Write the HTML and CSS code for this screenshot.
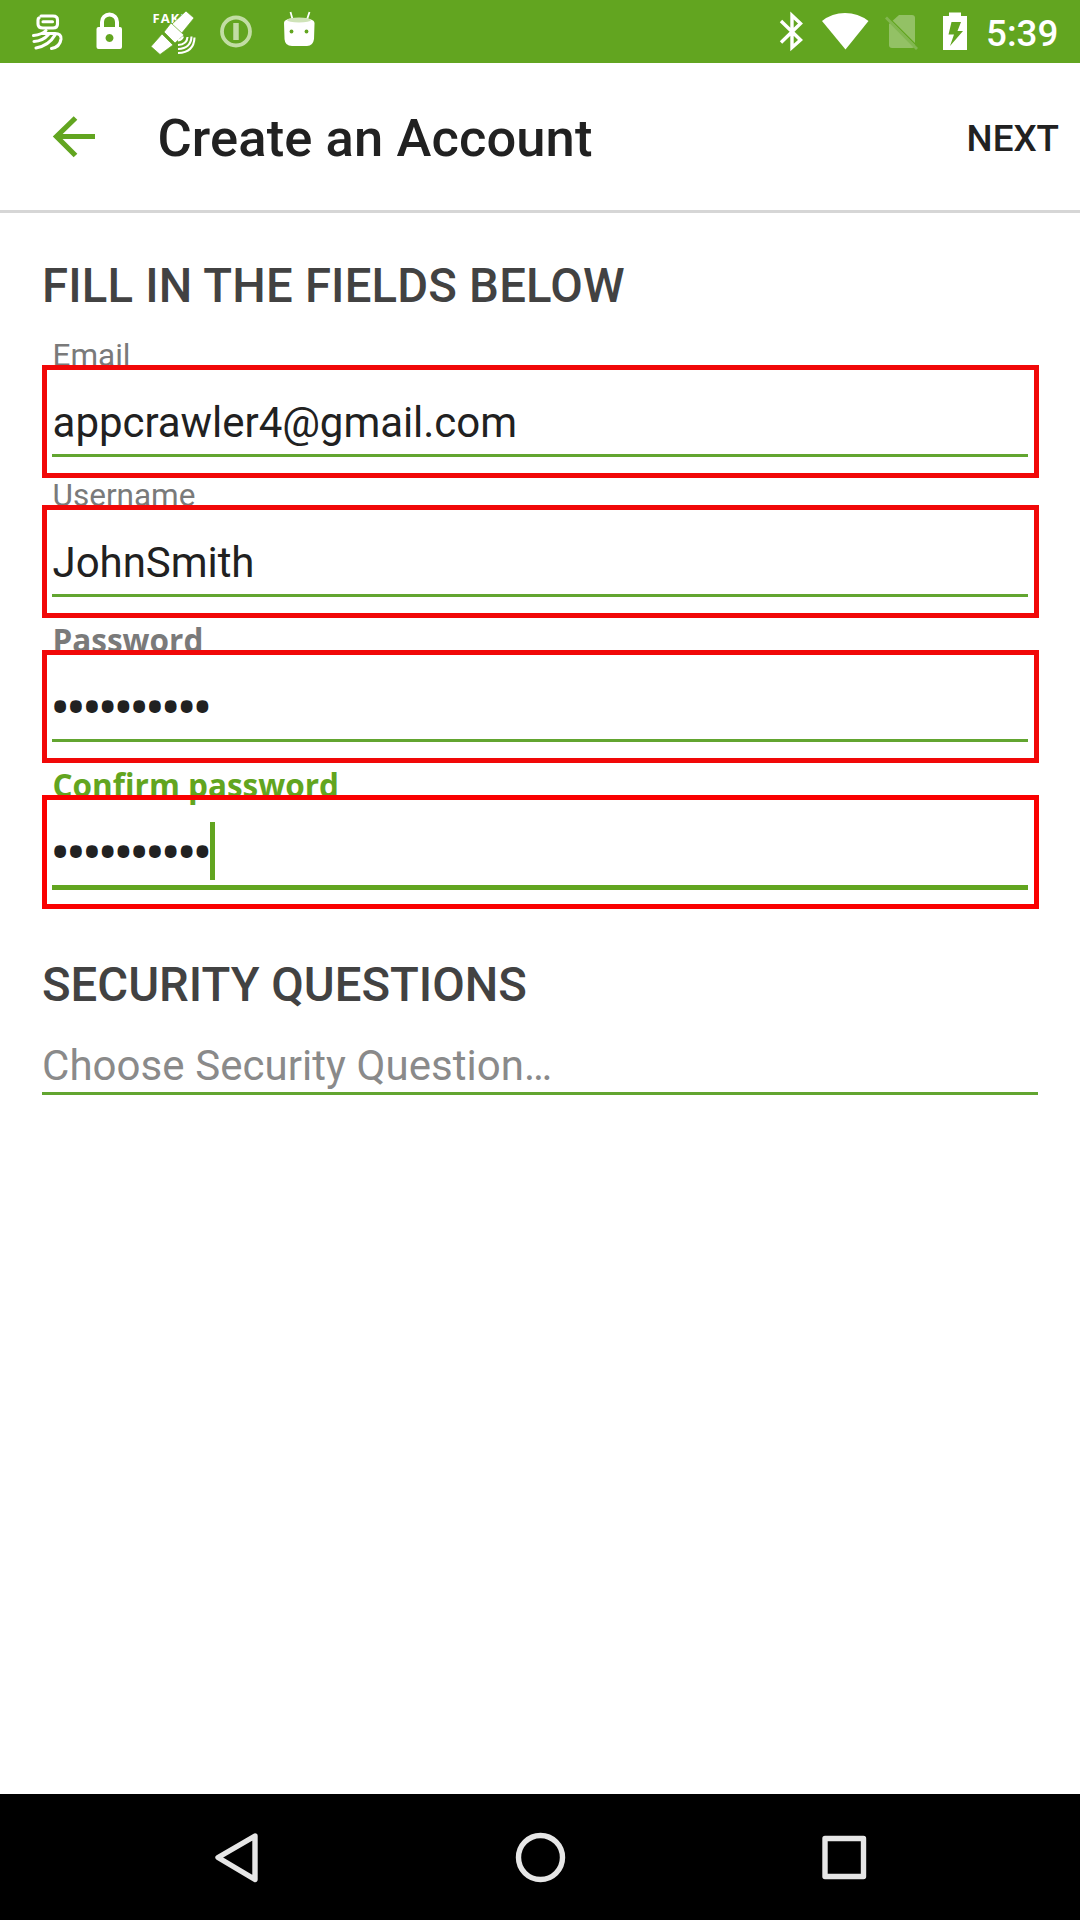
FILE: index.html
```html
<!DOCTYPE html>
<html lang="en">
<head>
<meta charset="utf-8">
<title>Create an Account</title>
<link rel="stylesheet" href="styles.css">
</head>
<body>
<div class="status">
  <div class="notifications">
    <svg width="63" height="63" viewBox="16 0 63 63" fill="none" stroke="#fff" stroke-width="3.1" stroke-linecap="round" stroke-linejoin="round">
      <path d="M41 16H53Q57.500 16 57.500 20V24Q57.500 28 53 28H43Q38 28 38 24V20Q38 18.500 39 18M43 21.800H52.500"/>
      <path d="M33.500 35.500Q42 34.500 46 30.500M43 33.500H55Q61.500 33.500 61 39Q60 47 51.500 48.500M34 41.500Q43 41 48.500 34.500M36 48Q49 45.500 55 35"/>
    </svg>
    <svg width="63" height="63" viewBox="79 0 63 63">
      <path d="M102 29V22a7.500 7.500 0 0 1 15 0V29" fill="none" stroke="#fff" stroke-width="4"/>
      <path fill="#fff" fill-rule="evenodd" d="M98.500 27H120q2 0 2 2V47q0 2-2 2H98.500q-2 0-2-2V29q0-2 2-2ZM109.500 34a4 4 0 1 0 .01 0Z"/>
    </svg>
    <svg width="63" height="63" viewBox="142 0 63 63">
      <text class="tag" x="152.500" y="23">FAKE</text>
      <g fill="#fff" stroke="#62a520" stroke-width=".7">
        <path d="M186 11L194 18L181 34L171 25Z"/>
        <path d="M162 34L173 45L160 54.500L151 46.500Z"/>
        <path d="M171 23L184 35L175 43L164 32Z"/>
      </g>
      <path d="M178 40.500q4-.5 5-4M178 45q9-.5 9.500-8M178 49q13-.5 13.500-12.500M178 53q16-.5 16.500-15.500" fill="none" stroke="#fff" stroke-width="2.100"/>
    </svg>
    <svg width="63" height="63" viewBox="205 0 63 63" fill="none" stroke="#c2dda4">
      <circle cx="236" cy="31.500" r="14" stroke-width="3.800"/>
      <path d="M236 23V40" stroke-width="5.500"/>
    </svg>
    <svg width="63" height="63" viewBox="268 0 63 63">
      <path d="M290.500 12L293 21M309.500 12L306.500 21" stroke="#fff" stroke-width="1.800"/>
      <path d="M284 23Q284 18 299 18T314.500 23L314 39Q313 46 307 46H292Q285 46 284.500 39Z" fill="#fff"/>
      <ellipse cx="299" cy="20" rx="12" ry="2.500" fill="#cfe3b8"/>
      <circle cx="291.500" cy="31.500" r="1.900" fill="#62a520"/><circle cx="306.500" cy="31.500" r="1.900" fill="#62a520"/>
    </svg>
  </div>
  <div class="system">
    <svg width="44" height="63" viewBox="770 0 44 63" fill="none" stroke="#fff" stroke-width="3.400">
      <path d="M781 21L800.500 40L792 47.500V15.500L800.500 23.500L781 42.500"/>
    </svg>
    <svg width="62" height="63" viewBox="814 0 62 63"><path fill="#fff" d="M822 21Q832 13 845 13T868.500 21L845.500 49.500Z"/></svg>
    <svg width="54" height="63" viewBox="876 0 54 63">
      <path fill="#93c165" d="M899 15H912q3 0 3 3V45q0 3-3 3H892q-3 0-3-3V24Z"/>
      <path d="M887.500 16.500L918 47" stroke="#62a520" stroke-width="1.500"/>
      <path d="M886 17.500L917 49" stroke="#82b750" stroke-width="2.800"/>
    </svg>
    <svg width="50" height="63" viewBox="930 0 50 63">
      <path fill="#fff" fill-rule="evenodd" d="M949 12.500H961V16H967V50H943V16H949ZM951.500 22L948.500 34.500H954L950 46L963 31H957.500L961 22Z"/>
    </svg>
    <span class="time">5:39</span>
  </div>
</div>
<header class="bar">
  <svg class="back" width="44" height="44" viewBox="52 115 44 44" fill="none" stroke="#62a520" stroke-width="5.200">
    <path d="M75.500 118L56.500 136.500L75.500 155.500M56 136.500H95"/>
  </svg>
  <h1 class="title">Create an Account</h1>
  <span class="next">NEXT</span>
</header>
<main class="form">
  <h2 class="heading main">FILL IN THE FIELDS BELOW</h2>
  <div class="field first">
    <div class="label">Email</div>
    <div class="box"><div class="value">appcrawler4@gmail.com</div></div>
  </div>
  <div class="field">
    <div class="label">Username</div>
    <div class="box"><div class="value">JohnSmith</div></div>
  </div>
  <div class="field secret">
    <div class="label">Password</div>
    <div class="box"><div class="value">••••••••••</div></div>
  </div>
  <div class="field secret active">
    <div class="label">Confirm password</div>
    <div class="box"><div class="value">••••••••••<span class="cursor"></span></div></div>
  </div>
  <h2 class="heading second">SECURITY QUESTIONS</h2>
  <div class="question">Choose Security Question…</div>
</main>
<nav class="nav">
  <svg width="1080" height="126" viewBox="0 1794 1080 126" fill="none" stroke="#e6e6e6" stroke-width="5.400" stroke-linejoin="round">
    <path d="M255 1836L218 1857.500L255 1879.500Z"/>
    <circle cx="540.500" cy="1857.500" r="22"/>
    <rect x="825" y="1838.500" width="38.500" height="38"/>
  </svg>
</nav>
</body>
</html>
```
FILE: styles.css
```css
* { box-sizing: border-box; }
body {
  margin: 0;
  width: 1080px;
  height: 1920px;
  display: flex;
  flex-direction: column;
  background: #fff;
  color: #212121;
  font-family: Roboto, sans-serif;
  overflow: hidden;
}
svg { display: block; flex: none; }
h1, h2 { margin: 0; font-weight: 500; white-space: nowrap; }
.status {
  height: 63px;
  flex: none;
  display: flex;
  justify-content: space-between;
  background: #62a520;
  color: #fff;
}
.notifications { display: flex; padding-left: 16px; }
.tag { font: bold 13px "Open Sans", sans-serif; letter-spacing: 1px; fill: #fff; }
.system { display: flex; width: 310px; }
.time { font-size: 36.75px; font-weight: 500; line-height: 67px; padding-left: 6px; }
.bar {
  height: 150px;
  flex: none;
  display: flex;
  align-items: center;
  padding: 0 21px 0 52px;
  border-bottom: 3px solid #d6d6d6;
}
.title { font-size: 52.5px; line-height: 60px; margin: 3px 0 0 61.5px; letter-spacing: 0.1px; font-weight: 550; }
.next { margin: 3px 0 0 auto; font-size: 36.75px; font-weight: 550; }
.form { flex: 1; padding: 45px 42px 0 42px; }
.heading { font-size: 47.25px; line-height: 56px; color: #424242; }
.main { letter-spacing: 0.2px; }
.second { margin-top: 48px; }
.first { margin-top: 24px; }
.label {
  height: 27px;
  padding-left: 10.5px;
  font-size: 31.5px;
  line-height: 35px;
  color: #7a7a7a;
}
.box {
  position: relative;
  height: 113px;
  margin-right: -1px;
  border: 5px solid #f10808;
  padding: 0 6px 0 5px;
}
.value {
  height: 87px;
  padding: 28px 0 0 0.6px;
  border-bottom: 3px solid #62a530;
  font-size: 42px;
  line-height: 50px;
  letter-spacing: -0.05px;
}
.secret { padding-top: 5px; }
.secret .label { line-height: 33px; font-family: "Open Sans", "Noto Sans", sans-serif; font-weight: 700; }
.secret .value { padding: 26px 0 0 0.3px; letter-spacing: 0; font-family: "Open Sans", sans-serif; font-weight: 700; display: flex; }
.active .label { color: #62a520; }
.active .box { height: 114px; border-color: #fa0000; }
.active .value { height: 90px; border-bottom: 5px solid #62a520; }
.cursor { width: 5px; height: 58px; margin-top: -4px; background: #62a520; }
.question {
  height: 53px;
  margin-top: 29px;
  border-bottom: 3px solid #62a530;
  font-size: 42px;
  line-height: 48px;
  letter-spacing: 0.06px;
  color: #8a8a8a;
}
.nav { height: 126px; flex: none; background: #000; }
```
